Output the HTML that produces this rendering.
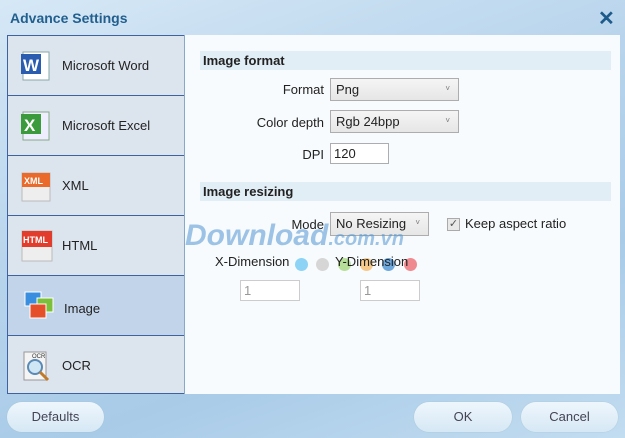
<!DOCTYPE html>
<html><head><style>
*{box-sizing:border-box;margin:0;padding:0}
body{width:625px;height:438px;overflow:hidden;font-family:"Segoe UI","Liberation Sans",sans-serif;font-size:13px;color:#222;background:linear-gradient(160deg,#d6e8f6 0%,#b8d4ec 40%,#a9cbe8 70%,#c2dcf0 100%);position:relative}
.abs{position:absolute}
.title{left:10px;top:10px;font-weight:bold;font-size:14px;color:#225f8e}
.close{left:598px;top:6px;font-size:20px;color:#1e5a8a;font-weight:bold}
.left{left:7px;top:35px;width:177px;height:359px;background:#dce4ee;border:1px solid #3f63a0;border-right:none}
.item{position:absolute;left:0;width:176px;height:60px;border-bottom:1px solid #3f63a0}
.item span{position:absolute;left:54px;top:22px;font-size:13px}
.sel{background:#c2d4ea}
.right{left:184px;top:35px;width:436px;height:359px;background:#f8fbfd;border-left:1px solid #8aa6c8}
.hdr{position:absolute;left:15px;width:411px;height:19px;background:#e2eef6;font-weight:bold;padding-left:3px;line-height:19px}
.lbl{position:absolute;text-align:right}
.sel-box{position:absolute;background:linear-gradient(#f5f5f5,#e6e6e6);border:1px solid #adadad;padding-left:5px;line-height:21px}
.sel-box:after{content:"˅";position:absolute;right:8px;top:-1px;font-size:8px;color:#777}
.inp{position:absolute;background:#fff;border:1px solid #abadb3;padding-left:3px;line-height:19px}
.btn{position:absolute;height:30px;border-radius:15px;background:linear-gradient(#eef6fc,#d6e8f5);text-align:center;line-height:30px;color:#445;font-size:13px;box-shadow:0 0 1px #9bb}
.dot{position:absolute;width:13px;height:13px;border-radius:50%}
</style></head><body>
<div class="abs title">Advance Settings</div>
<div class="abs close">✕</div>
<div class="abs left">
 <div class="item" style="top:0"><svg class="abs" style="left:13px;top:14px" width="30" height="32"><rect x="2" y="2" width="26" height="28" fill="#fff" stroke="#8aa"/><rect x="0" y="4" width="20" height="20" fill="#2a5db0"/><text x="2" y="21" font-size="17" font-weight="bold" fill="#fff" font-family="Liberation Sans">W</text></svg><span>Microsoft Word</span></div>
 <div class="item" style="top:60px"><svg class="abs" style="left:13px;top:14px" width="30" height="32"><rect x="2" y="2" width="26" height="28" fill="#eef" stroke="#8a8"/><rect x="0" y="4" width="20" height="20" fill="#3b9a3b"/><text x="3" y="21" font-size="17" font-weight="bold" fill="#fff" font-family="Liberation Sans">X</text></svg><span>Microsoft Excel</span></div>
 <div class="item" style="top:120px"><svg class="abs" style="left:13px;top:16px" width="30" height="30"><rect x="1" y="1" width="28" height="28" fill="#eee" stroke="#bbb"/><rect x="1" y="1" width="28" height="14" fill="#e96a2a"/><text x="3" y="12" font-size="9" font-weight="bold" fill="#fff" font-family="Liberation Sans">XML</text></svg><span>XML</span></div>
 <div class="item" style="top:180px"><svg class="abs" style="left:13px;top:14px" width="32" height="32"><rect x="1" y="1" width="30" height="30" fill="#eee" stroke="#bbb"/><rect x="1" y="1" width="30" height="16" fill="#e23c2c"/><text x="2" y="13" font-size="9" font-weight="bold" fill="#fff" font-family="Liberation Sans">HTML</text></svg><span>HTML</span></div>
 <div class="item sel" style="top:240px"><svg class="abs" style="left:15px;top:14px" width="32" height="32"><rect x="2" y="2" width="16" height="14" fill="#3a8ee0" stroke="#fff"/><rect x="14" y="8" width="16" height="14" fill="#7cbf3a" stroke="#fff"/><rect x="7" y="14" width="16" height="14" fill="#e5502a" stroke="#fff"/></svg><span style="left:56px;top:25px">Image</span></div>
 <div class="item" style="top:300px;border:none"><svg class="abs" style="left:14px;top:12px" width="32" height="36"><rect x="2" y="4" width="22" height="28" fill="#f4f4f4" stroke="#999"/><text x="10" y="10" font-size="6" fill="#333" font-family="Liberation Sans">OCR</text><circle cx="13" cy="19" r="7" fill="#cfe6f5" stroke="#5a8ab5" stroke-width="2"/><line x1="18" y1="24" x2="26" y2="32" stroke="#c07a2a" stroke-width="3"/></svg><span>OCR</span></div>
</div>
<div class="abs right">
 <div class="hdr" style="top:16px">Image format</div>
 <div class="lbl" style="right:296px;top:47px">Format</div>
 <div class="sel-box" style="left:145px;top:43px;width:129px;height:23px">Png</div>
 <div class="lbl" style="right:296px;top:80px">Color depth</div>
 <div class="sel-box" style="left:145px;top:75px;width:129px;height:23px">Rgb 24bpp</div>
 <div class="lbl" style="right:296px;top:112px">DPI</div>
 <div class="inp" style="left:145px;top:108px;width:59px;height:21px">120</div>
 <div class="hdr" style="top:147px">Image resizing</div>
 <div class="lbl" style="right:296px;top:182px">Mode</div>
 <div class="sel-box" style="left:145px;top:177px;width:99px;height:24px;line-height:22px">No Resizing</div>
 <div class="abs" style="left:262px;top:183px;width:13px;height:13px;border:1px solid #aaa;background:#e8e8e8;font-size:11px;line-height:11px;text-align:center;color:#555">✓</div>
 <div class="abs" style="left:280px;top:181px">Keep aspect ratio</div>
 <div class="abs" style="left:0px;top:184px;font-size:30px;font-weight:bold;font-style:italic;color:rgba(80,150,210,0.55);font-family:'Liberation Sans',sans-serif">Download<span style="font-size:20px">.com.vn</span></div>
 <div class="abs" style="left:30px;top:219px">X-Dimension</div>
 <div class="dot" style="left:110px;top:223px;background:#8dd3f5"></div>
 <div class="dot" style="left:131px;top:223px;background:#d6d6d6"></div>
 <div class="dot" style="left:153px;top:223px;background:#b6df9a"></div>
 <div class="dot" style="left:175px;top:223px;background:#f5ca8a"></div>
 <div class="dot" style="left:197px;top:223px;background:#6fa8dc"></div>
 <div class="dot" style="left:219px;top:223px;background:#ef8a90"></div>
 <div class="abs" style="left:150px;top:219px">Y-Dimension</div>
 <div class="inp" style="left:55px;top:245px;width:60px;height:21px;color:#999;border-color:#ccc">1</div>
 <div class="inp" style="left:175px;top:245px;width:60px;height:21px;color:#999;border-color:#ccc">1</div>
</div>
<div class="btn" style="left:7px;top:402px;width:97px">Defaults</div>
<div class="btn" style="left:414px;top:402px;width:98px">OK</div>
<div class="btn" style="left:521px;top:402px;width:97px">Cancel</div>
</body></html>
